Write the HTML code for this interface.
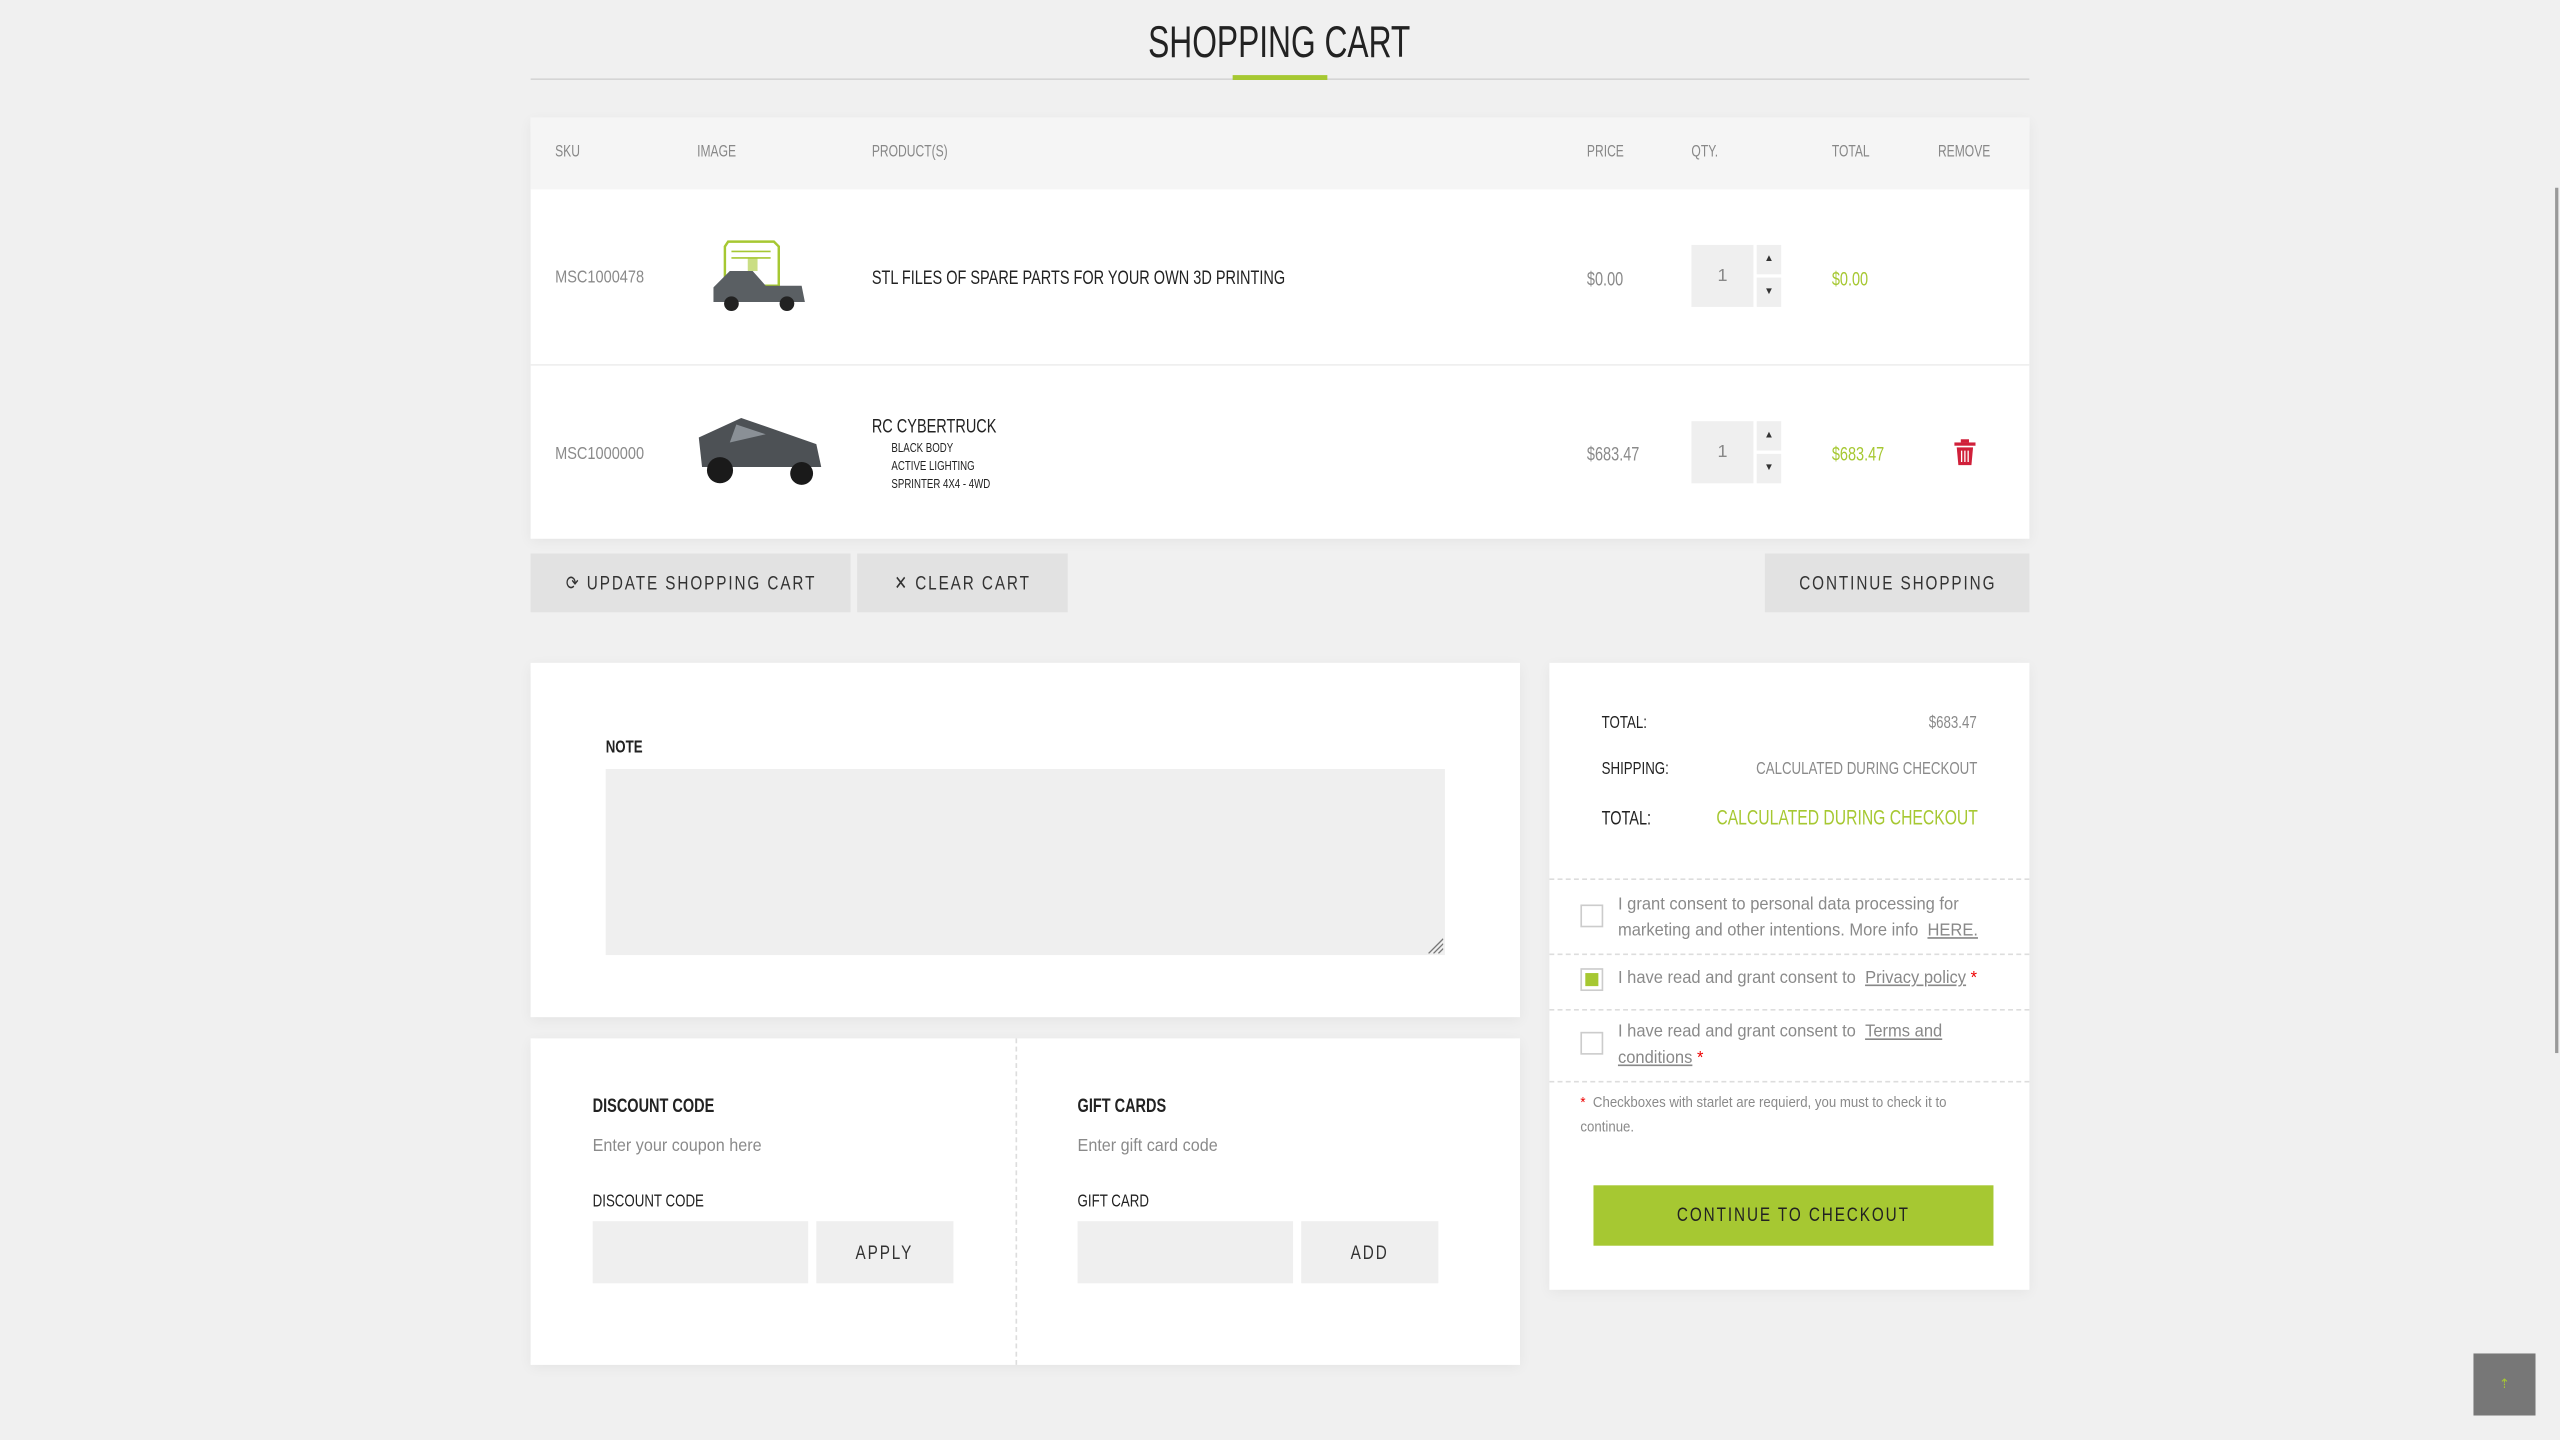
<!DOCTYPE html>
<html><head><meta charset="utf-8"><style>
html,body{margin:0;padding:0;width:2560px;height:1440px;overflow:hidden;background:#f0f0f0}
#w{position:absolute;left:0;top:0;width:1568px;height:882px;transform:scale(1.63265);transform-origin:0 0;font-family:"Liberation Sans",sans-serif;color:#333}
.a{position:absolute;white-space:nowrap}
.c{transform:scaleX(.74);transform-origin:0 0}
.cl{transform:scaleX(.9);transform-origin:0 0}
.cr{transform:scaleX(.74);transform-origin:100% 0}
.s{display:inline-block;transform:scaleX(.78);transform-origin:50% 50%;white-space:nowrap}
.card{position:absolute;background:#fff;box-shadow:0 2px 8px rgba(0,0,0,.05)}
.hd{font-size:10px;color:#888;top:88px}
.g{color:#8a8a8a}
.btn{position:absolute;background:#e2e2e2;font-size:12px;letter-spacing:1.5px;color:#333;text-align:center;line-height:36px;white-space:nowrap;overflow:hidden}
.in{position:absolute;background:#efefef}
.dash{position:absolute;border-top:1px dashed #ddd;left:0;right:0}
.cb{position:absolute;width:12px;height:12px;border:1px solid #ccc;background:#fff;left:19px}
u{color:#888}
.st{color:#e00}
</style></head><body><div id="w">
<div class="a" style="left:0;width:1568px;text-align:center;top:11px;font-size:27px;color:#222"><span class="s" style="transform:scaleX(.72)">SHOPPING CART</span></div>
<div class="a" style="left:325px;width:918px;top:48px;height:1px;background:#d5d5d5"></div>
<div class="a" style="left:755px;width:58px;top:46px;height:3px;background:#a6c832"></div>

<div class="card" style="left:325px;top:72px;width:918px;height:258px">
 <div class="a" style="left:0;top:0;width:918px;height:44px;background:#f5f5f5"></div>
 <div class="a" style="left:0;top:151px;width:918px;height:1px;background:#eee"></div>
</div>
<div class="a hd c" style="left:340px">SKU</div>
<div class="a hd c" style="left:427px">IMAGE</div>
<div class="a hd c" style="left:534px">PRODUCT(S)</div>
<div class="a hd c" style="left:972px">PRICE</div>
<div class="a hd c" style="left:1036px">QTY.</div>
<div class="a hd c" style="left:1122px">TOTAL</div>
<div class="a hd c" style="left:1187px">REMOVE</div>

<div class="a g" style="left:340px;top:164px;font-size:11px;transform:scaleX(.81);transform-origin:0 0">MSC1000478</div>
<svg class="a" style="left:434px;top:146px" width="62" height="48" viewBox="0 0 62 48">
<path d="M12 2h28l3 3v24H10V5z" fill="none" stroke="#a6c832" stroke-width="1.5"/><path d="M14 8h24M14 12h24" stroke="#a6c832"/><rect x="24" y="12" width="6" height="8" fill="#a6c832" opacity=".6"/>
<path d="M3 30l10-10h14l8 9h22l2 10H3z" fill="#5a5f63"/><circle cx="14" cy="40" r="4.5" fill="#222"/><circle cx="48" cy="40" r="4.5" fill="#222"/></svg>
<div class="a c" style="left:534px;top:163px;font-size:12px;color:#222">STL FILES OF SPARE PARTS FOR YOUR OWN 3D PRINTING</div>
<div class="a g c" style="left:972px;top:164px;font-size:12px">$0.00</div>
<div class="in" style="left:1036px;top:150px;width:38px;height:38px;text-align:center;line-height:38px;font-size:11px;color:#888">1</div>
<div class="in" style="left:1076px;top:150px;width:15px;height:18px;font-size:6px;text-align:center;line-height:18px">▲</div>
<div class="in" style="left:1076px;top:170px;width:15px;height:18px;font-size:6px;text-align:center;line-height:18px">▼</div>
<div class="a c" style="left:1122px;top:164px;font-size:12px;color:#a6c832">$0.00</div>

<div class="a g" style="left:340px;top:272px;font-size:11px;transform:scaleX(.81);transform-origin:0 0">MSC1000000</div>
<svg class="a" style="left:425px;top:252px" width="82" height="48" viewBox="0 0 82 48">
<path d="M3 16l26-12 46 16 3 14H5z" fill="#4d5155"/><path d="M26 8l18 6-22 5z" fill="#8a9096"/><circle cx="16" cy="36" r="8" fill="#1a1a1a"/><circle cx="66" cy="38" r="7" fill="#1a1a1a"/></svg>
<div class="a c" style="left:534px;top:254px;font-size:12px;color:#222">RC CYBERTRUCK</div>
<div class="a c" style="left:546px;top:269px;font-size:8px;color:#222;line-height:11px">BLACK BODY<br>ACTIVE LIGHTING<br>SPRINTER 4X4 - 4WD</div>
<div class="a g c" style="left:972px;top:271px;font-size:12px">$683.47</div>
<div class="in" style="left:1036px;top:258px;width:38px;height:38px;text-align:center;line-height:38px;font-size:11px;color:#888">1</div>
<div class="in" style="left:1076px;top:258px;width:15px;height:18px;font-size:6px;text-align:center;line-height:18px">▲</div>
<div class="in" style="left:1076px;top:278px;width:15px;height:18px;font-size:6px;text-align:center;line-height:18px">▼</div>
<div class="a c" style="left:1122px;top:271px;font-size:12px;color:#a6c832">$683.47</div>
<svg class="a" style="left:1197px;top:269px" width="13" height="16" viewBox="0 0 13 16"><rect x="0" y="2" width="13" height="2" fill="#d0203a"/><rect x="4" y="0" width="5" height="2" fill="#d0203a"/><path d="M1.5 5h10l-1 11h-8z" fill="#d0203a"/><path d="M4.5 7v7M6.5 7v7M8.5 7v7" stroke="#fff" stroke-width=".8"/></svg>

<div class="btn" style="left:325px;top:339px;width:196px;height:36px"><span class="s">⟳ UPDATE SHOPPING CART</span></div>
<div class="btn" style="left:525px;top:339px;width:129px;height:36px"><span class="s">✕ CLEAR CART</span></div>
<div class="btn" style="left:1081px;top:339px;width:162px;height:36px"><span class="s">CONTINUE SHOPPING</span></div>

<div class="card" style="left:325px;top:406px;width:606px;height:217px"></div>
<div class="a c" style="left:371px;top:452px;font-size:11px;font-weight:bold;color:#222">NOTE</div>
<div class="in" style="left:371px;top:471px;width:514px;height:114px"></div>
<svg class="a" style="left:874px;top:574px" width="10" height="10"><path d="M1 10L10 1M4 10L10 4M7 10L10 7" stroke="#777" stroke-width=".8"/></svg>

<div class="card" style="left:325px;top:636px;width:606px;height:200px"><div class="a" style="left:297px;top:0;height:200px;border-left:1px dashed #ddd"></div></div>
<div class="a c" style="left:363px;top:670px;font-size:12px;font-weight:bold;color:#222">DISCOUNT CODE</div>
<div class="a g cl" style="left:363px;top:696px;font-size:11px">Enter your coupon here</div>
<div class="a c" style="left:363px;top:730px;font-size:11px;color:#222">DISCOUNT CODE</div>
<div class="in" style="left:363px;top:748px;width:132px;height:38px"></div>
<div class="btn" style="left:500px;top:748px;width:84px;height:38px;background:#efefef;line-height:38px"><span class="s">APPLY</span></div>
<div class="a c" style="left:660px;top:670px;font-size:12px;font-weight:bold;color:#222">GIFT CARDS</div>
<div class="a g cl" style="left:660px;top:696px;font-size:11px">Enter gift card code</div>
<div class="a c" style="left:660px;top:730px;font-size:11px;color:#222">GIFT CARD</div>
<div class="in" style="left:660px;top:748px;width:132px;height:38px"></div>
<div class="btn" style="left:797px;top:748px;width:84px;height:38px;background:#efefef;line-height:38px"><span class="s">ADD</span></div>

<div class="card" style="left:949px;top:406px;width:294px;height:384px">
 <div class="a c" style="left:32px;top:31px;font-size:11px;color:#222">TOTAL:</div>
 <div class="a g cr" style="right:32px;top:31px;font-size:11px">$683.47</div>
 <div class="a c" style="left:32px;top:59px;font-size:11px;color:#222">SHIPPING:</div>
 <div class="a g cr" style="right:32px;top:59px;font-size:11px">CALCULATED DURING CHECKOUT</div>
 <div class="a c" style="left:32px;top:88px;font-size:12px;color:#222">TOTAL:</div>
 <div class="a cr" style="right:32px;top:87px;font-size:13px;color:#a6c832">CALCULATED DURING CHECKOUT</div>
 <div class="dash" style="top:132px"></div>
 <div class="cb" style="top:148px"></div>
 <div class="a g cl" style="left:42px;top:140px;font-size:11px;line-height:16px;transform:scaleX(.92)">I grant consent to personal data processing for<br>marketing and other intentions. More info &nbsp;<u>HERE.</u></div>
 <div class="dash" style="top:178px"></div>
 <div class="cb" style="top:187px"><div style="margin:2px;width:8px;height:8px;background:#a6c832"></div></div>
 <div class="a g cl" style="left:42px;top:187px;font-size:11px;transform:scaleX(.92)">I have read and grant consent to &nbsp;<u>Privacy policy</u> <span class="st">*</span></div>
 <div class="dash" style="top:256px"></div>
 <div class="dash" style="top:212px"></div>
 <div class="cb" style="top:226px"></div>
 <div class="a g cl" style="left:42px;top:218px;font-size:11px;line-height:16px;transform:scaleX(.92)">I have read and grant consent to &nbsp;<u>Terms and</u><br><u>conditions</u> <span class="st">*</span></div>
 <div class="a g cl" style="left:19px;top:262px;font-size:9px;line-height:15px"><span class="st">*</span> &nbsp;Checkboxes with starlet are requierd, you must to check it to<br>continue.</div>
 <div class="a" style="left:27px;top:320px;width:245px;height:37px;background:#a6c832;text-align:center;line-height:37px;font-size:12px;letter-spacing:1.5px;color:#222"><span class="s">CONTINUE TO CHECKOUT</span></div>
</div>

<div class="a" style="left:1515px;top:829px;width:38px;height:38px;background:#777;text-align:center;line-height:38px;font-size:8px;color:#a6c832">⇡</div>
<div class="a" style="left:1565px;top:115px;width:2px;height:530px;background:#999"></div>
</div></body></html>
